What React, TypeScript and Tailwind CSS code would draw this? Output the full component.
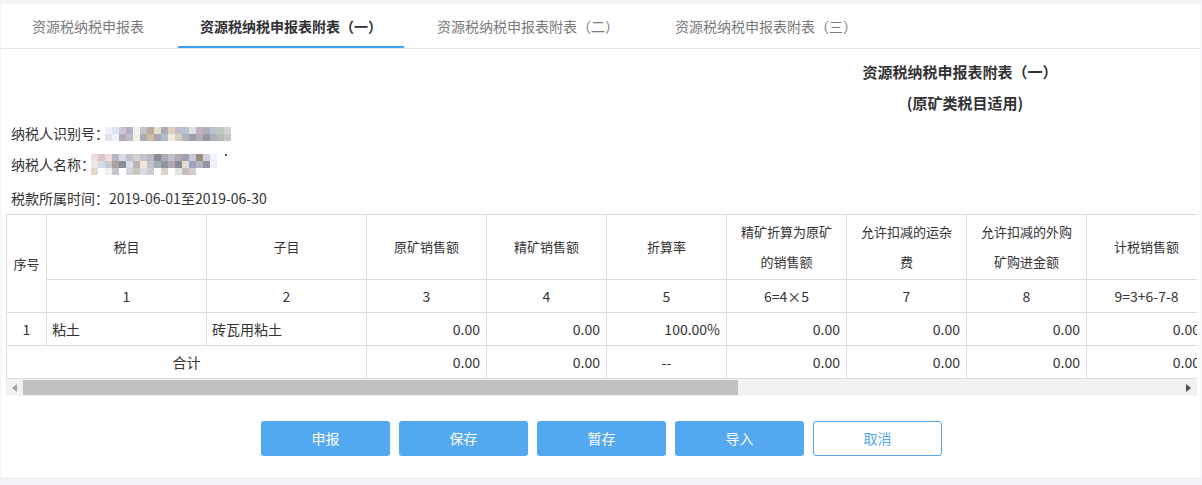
import React from "react";

const FONT = '"Microsoft YaHei", "Noto Sans CJK SC", "Noto Sans", sans-serif';

const tabs = [
  { label: "资源税纳税申报表", w: "w-[156px]", ml: "ml-[9px]" },
  { label: "资源税纳税申报表附表（一）", w: "w-[226px]", ml: "ml-[12px]", active: true },
  { label: "资源税纳税申报表附表（二）", w: "w-[220px]", ml: "ml-[14px]" },
  { label: "资源税纳税申报表附表（三）", w: "w-[220px]", ml: "ml-[18px]" },
];

// mosaic blocks that stand in for the blurred taxpayer details
const idRows = [
  ["#eef0f6", "#dfe6f0", "#c8c8d8", "#b8aec4", "#f0f0f0", "#c4c4cc", "#b8ad9c", "#e8dccc", "#acacb8", "#dcd0bc", "#c0bccc", "#b8c4d4", "#e0e0e0", "#c0b4bc", "#b0b0b8", "#b8c4d0", "#c0c8c0", "#d4d4d4"],
  ["#e0e0e8", "#f0f4f8", "#b8a8bc", "#bcbccc", "#f4f0e8", "#acacb4", "#ccbca0", "#a8a8b8", "#b4bcd0", "#eee8dc", "#d4ccc0", "#b4b4c0", "#a0a0a8", "#b0b0b4", "#98989c", "#acb0bc", "#b4bcb4", "#c4c8c4"],
];

const nameRows = [
  ["#ecdcdc", "#e0c4c4", "#ecdcdc", "#b8b8c0", "#d0dce8", "#c0c0cc", "#d8d0d0", "#c4c4cc", "#b8b8c4", "#8c8c94", "#acacb8", "#c0c0c8", "#b4a8b4", "#a0a0ac", "#c8c8dc", "#9c8c7c", "#ccd4dc", "#eef4fa"],
  ["#f0e8e0", "#d0dce8", "#c8c8d0", "#a8a0a0", "#8c8c98", "#dcdce4", "#b8b4b4", "#f0e8d8", "#c0c0c8", "#a4acb8", "#9494a0", "#b0a8b0", "#8c8c98", "#e4dcd0", "#9ca4bc", "#b4b4c0", "#9494a4", "#f0f0f4"],
  ["#e4d8cc", "#ffffff", "#f0f0f0", "#c4c4cc", "#ffffff", "#d4d4dc", "#ccc4c0", "#dcdce0", "#ccccd4", "#ffffff", "#dcd4cc", "#ffffff", "#e4e4e4", "#c8bcb4", "#d4cccc", "#ffffff", "#ffffff", "#ffffff"],
];

function Mosaic({ rows, size }: { rows: string[][]; size: number }) {
  return (
    <div className="flex flex-col">
      {rows.map((row, i) => (
        <div key={i} className="flex">
          {row.map((c, j) => (
            <div key={j} style={{ background: c, width: size, height: size }} />
          ))}
        </div>
      ))}
    </div>
  );
}

const cell = "border border-[#dcdcdc] text-[#333]";

const headCols = [
  "原矿销售额",
  "精矿销售额",
  "折算率",
  "精矿折算为原矿的销售额",
  "允许扣减的运杂费",
  "允许扣减的外购矿购进金额",
  "计税销售额",
];
const nums = ["3", "4", "5", "6=4×5", "7", "8", "9=3+6-7-8"];
const dataRow = ["0.00", "0.00", "100.00%", "0.00", "0.00", "0.00", "0.00"];
const totalRow = ["0.00", "0.00", "--", "0.00", "0.00", "0.00", "0.00"];

export default function App() {
  return (
    <div className="w-[1202px] h-[485px] bg-[#f2f3f7] pt-[4px] px-[1px]" style={{ fontFamily: FONT }}>
      <div className="bg-white h-[473px] w-[1200px]">
        {/* tabs */}
        <div className="flex h-[45px] border-b border-[#e4e7ed]">
          {tabs.map((t) => (
            <div
              key={t.label}
              className={`${t.w} ${t.ml} h-[44px] flex items-center justify-center text-[14px] ${
                t.active ? "border-b-2 border-[#409eff] text-[#303133] font-bold pt-[2px]" : "text-[#7a7a7a]"
              }`}
            >
              {t.label}
            </div>
          ))}
        </div>

        {/* title */}
        <div className="ml-[760px] w-[400px] mt-[7px] text-center text-[15px] font-bold text-[#333] leading-[31px]">
          <div className="pr-[2px]">资源税纳税申报表附表（一）</div>
          <div className="pl-[8px]">(原矿类税目适用)</div>
        </div>

        {/* taxpayer info */}
        <div className="pl-[10px] text-[14px] text-[#333]">
          <div className="h-[31px] flex items-center">
            <span>纳税人识别号：</span>
            <div className="ml-[-4px]">
              <Mosaic rows={idRows} size={7} />
            </div>
          </div>
          <div className="h-[31px] flex items-center">
            <span>纳税人名称：</span>
            <div className="ml-[-4px] flex items-start">
              <Mosaic rows={nameRows} size={7} />
              <div className="w-[2px] h-[2px] bg-[#555] ml-[8px]" />
            </div>
          </div>
          <div className="h-[31px] mt-[3px] flex items-center">税款所属时间：2019-06-01至2019-06-30</div>
        </div>

        {/* table */}
        <div className="ml-[5px] w-[1191px] overflow-hidden">
          <table className="table-fixed border-collapse w-[1200px] text-[13px]">
            <colgroup>
              <col className="w-[40px]" />
              <col className="w-[160px]" />
              <col className="w-[160px]" />
              {headCols.map((h) => (
                <col key={h} className="w-[120px]" />
              ))}
            </colgroup>
            <tbody>
              <tr className="h-[65px]">
                <td rowSpan={2} className={`${cell} text-center`}>序号</td>
                <td className={`${cell} text-center`}>税目</td>
                <td className={`${cell} text-center`}>子目</td>
                {headCols.map((h) => (
                  <td key={h} className={`${cell} text-center px-[10px] leading-[30px]`}>
                    {h}
                  </td>
                ))}
              </tr>
              <tr className="h-[33px] text-[14px]">
                <td className={`${cell} text-center`}>1</td>
                <td className={`${cell} text-center`}>2</td>
                {nums.map((n) => (
                  <td key={n} className={`${cell} text-center whitespace-nowrap`}>
                    {n}
                  </td>
                ))}
              </tr>
              <tr className="h-[33px] text-[14px]">
                <td className={`${cell} text-center`}>1</td>
                <td className={`${cell} pl-[5px]`}>粘土</td>
                <td className={`${cell} pl-[5px]`}>砖瓦用粘土</td>
                {dataRow.map((v, i) => (
                  <td key={i} className={`${cell} text-right pr-[6px] whitespace-nowrap`}>
                    {v}
                  </td>
                ))}
              </tr>
              <tr className="h-[33px] text-[14px]">
                <td colSpan={3} className={`${cell} text-center`}>合计</td>
                {totalRow.map((v, i) => (
                  <td
                    key={i}
                    className={`${cell} whitespace-nowrap ${v === "--" ? "text-center" : "text-right pr-[6px]"}`}
                  >
                    {v}
                  </td>
                ))}
              </tr>
            </tbody>
          </table>

          {/* horizontal scrollbar */}
          <div className="flex h-[17px] bg-[#f1f1f1] items-center">
            <div className="w-[17px] h-[17px] flex items-center justify-center">
              <svg width="5" height="8" viewBox="0 0 5 8">
                <path d="M5 0 L0 4 L5 8 Z" fill="#a3a3a3" />
              </svg>
            </div>
            <div className="w-[715px] h-[15px] bg-[#c1c1c1]" />
            <div className="flex-1" />
            <div className="w-[17px] h-[17px] flex items-center justify-center">
              <svg width="5" height="8" viewBox="0 0 5 8">
                <path d="M0 0 L5 4 L0 8 Z" fill="#505050" />
              </svg>
            </div>
          </div>
        </div>

        {/* buttons */}
        <div className="flex justify-center gap-[9px] mt-[25px] pl-[1px]">
          {["申报", "保存", "暂存", "导入"].map((b) => (
            <button
              key={b}
              className="w-[129px] h-[35px] rounded-[3px] bg-[#53a8f2] text-white text-[14px]"
            >
              {b}
            </button>
          ))}
          <button className="w-[129px] h-[35px] rounded-[3px] bg-white border border-[#53a8f2] text-[#53a8f2] text-[14px]">
            取消
          </button>
        </div>
      </div>
    </div>
  );
}
